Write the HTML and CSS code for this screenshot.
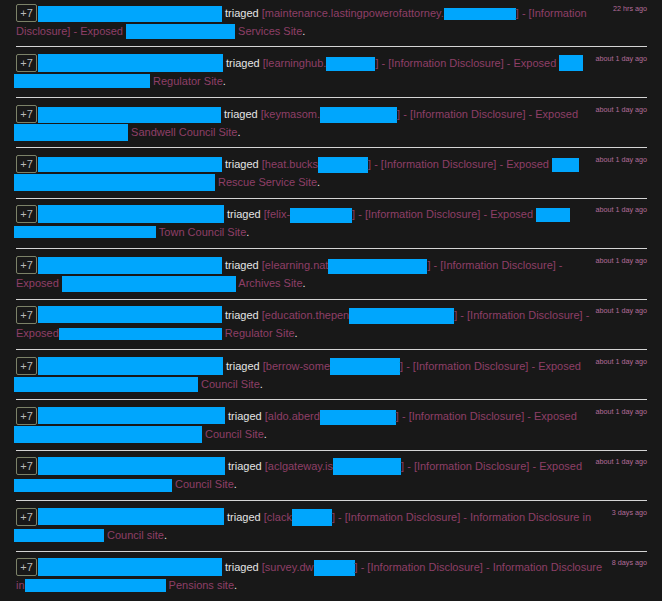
FILE: index.html
```html
<!DOCTYPE html>
<html>
<head>
<meta charset="utf-8">
<link rel="stylesheet" href="styles.css">
</head>
<body>
<ul class="feed">
  <li class="item">
    <p class="text"><span class="badge">+7</span><span class="rd" style="width:184px;height:16px;margin-top:2px"></span> <span class="verb">triaged</span> <span class="title">[maintenance.lastingpowerofattorney.<span class="rd" style="width:72px;height:12px;margin-top:4px"></span>] - [Information Disclosure] - Exposed <span class="rd" style="width:109px;height:15px;margin-top:2px"></span> Services Site</span>.</p>
    <span class="time">22 hrs ago</span>
  </li>
  <li class="item">
    <p class="text"><span class="badge">+7</span><span class="rd" style="width:185px;height:18px;margin-top:0"></span> <span class="verb">triaged</span> <span class="title">[learninghub.<span class="rd" style="width:49px;height:14px;margin-top:3px"></span>] - [Information Disclosure] - Exposed <span class="rd" style="width:24px;height:16px;margin-top:1px"></span> <span class="rd lead" style="width:136px;height:14px;margin-top:2px"></span> Regulator Site</span>.</p>
    <span class="time">about 1 day ago</span>
  </li>
  <li class="item">
    <p class="text"><span class="badge">+7</span><span class="rd" style="width:183px;height:16px;margin-top:2px"></span> <span class="verb">triaged</span> <span class="title">[keymasom.<span class="rd" style="width:77px;height:16px;margin-top:2px"></span>] - [Information Disclosure] - Exposed <span class="rd lead" style="width:114px;height:17px;margin-top:1px"></span> Sandwell Council Site</span>.</p>
    <span class="time">about 1 day ago</span>
  </li>
  <li class="item">
    <p class="text"><span class="badge">+7</span><span class="rd" style="width:184px;height:15px;margin-top:2px"></span> <span class="verb">triaged</span> <span class="title">[heat.bucks<span class="rd" style="width:50px;height:16px;margin-top:2px"></span>] - [Information Disclosure] - Exposed <span class="rd" style="width:27px;height:14px;margin-top:3px"></span> <span class="rd lead" style="width:201px;height:17px;margin-top:1px"></span> Rescue Service Site</span>.</p>
    <span class="time">about 1 day ago</span>
  </li>
  <li class="item">
    <p class="text"><span class="badge">+7</span><span class="rd" style="width:186px;height:18px;margin-top:0"></span> <span class="verb">triaged</span> <span class="title">[felix-<span class="rd" style="width:62px;height:15px;margin-top:3px"></span>] - [Information Disclosure] - Exposed <span class="rd" style="width:34px;height:14px;margin-top:3px"></span> <span class="rd lead" style="width:142px;height:12px;margin-top:3px"></span> Town Council Site</span>.</p>
    <span class="time">about 1 day ago</span>
  </li>
  <li class="item">
    <p class="text"><span class="badge">+7</span><span class="rd" style="width:184px;height:17px;margin-top:1px"></span> <span class="verb">triaged</span> <span class="title">[elearning.nat<span class="rd" style="width:99px;height:15px;margin-top:3px"></span>] - [Information Disclosure] - Exposed <span class="rd" style="width:174px;height:16px;margin-top:2px"></span> Archives Site</span>.</p>
    <span class="time">about 1 day ago</span>
  </li>
  <li class="item">
    <p class="text"><span class="badge">+7</span><span class="rd" style="width:184px;height:17px;margin-top:0"></span> <span class="verb">triaged</span> <span class="title">[education.thepen<span class="rd" style="width:105px;height:16px;margin-top:2px"></span>] - [Information Disclosure] - Exposed<span class="rd" style="width:163px;height:12px;margin-top:4px"></span> Regulator Site</span>.</p>
    <span class="time">about 1 day ago</span>
  </li>
  <li class="item">
    <p class="text"><span class="badge">+7</span><span class="rd" style="width:185px;height:18px;margin-top:0"></span> <span class="verb">triaged</span> <span class="title">[berrow-some<span class="rd" style="width:70px;height:17px;margin-top:1px"></span>] - [Information Disclosure] - Exposed <span class="rd lead" style="width:184px;height:15px;margin-top:2px"></span> Council Site</span>.</p>
    <span class="time">about 1 day ago</span>
  </li>
  <li class="item">
    <p class="text"><span class="badge">+7</span><span class="rd" style="width:187px;height:17px;margin-top:0"></span> <span class="verb">triaged</span> <span class="title">[aldo.aberd<span class="rd" style="width:76px;height:15px;margin-top:3px"></span>] - [Information Disclosure] - Exposed <span class="rd lead" style="width:188px;height:17px;margin-top:1px"></span> Council Site</span>.</p>
    <span class="time">about 1 day ago</span>
  </li>
  <li class="item">
    <p class="text"><span class="badge">+7</span><span class="rd" style="width:187px;height:18px;margin-top:0"></span> <span class="verb">triaged</span> <span class="title">[aclgateway.is<span class="rd" style="width:68px;height:17px;margin-top:1px"></span>] - [Information Disclosure] - Exposed <span class="rd lead" style="width:158px;height:13px;margin-top:4px"></span> Council Site</span>.</p>
    <span class="time">about 1 day ago</span>
  </li>
  <li class="item">
    <p class="text"><span class="badge">+7</span><span class="rd" style="width:186px;height:17px;margin-top:0"></span> <span class="verb">triaged</span> <span class="title">[clack<span class="rd" style="width:40px;height:17px;margin-top:1px"></span>] - [Information Disclosure] - Information Disclosure in <span class="rd lead" style="width:90px;height:13px;margin-top:3px"></span> Council site</span>.</p>
    <span class="time">3 days ago</span>
  </li>
  <li class="item">
    <p class="text"><span class="badge">+7</span><span class="rd" style="width:184px;height:18px;margin-top:0"></span> <span class="verb">triaged</span> <span class="title">[survey.dw<span class="rd" style="width:41px;height:16px;margin-top:2px"></span>] - [Information Disclosure] - Information Disclosure in<span class="rd" style="width:141px;height:13px;margin-top:3px"></span> Pensions site</span>.</p>
    <span class="time">8 days ago</span>
  </li>
</ul>
</body>
</html>
```

FILE: styles.css
```css
html, body {
  margin: 0;
  padding: 0;
  background: #181818;
}

body {
  font-family: "Liberation Sans", Arial, sans-serif;
  font-size: 11px;
  color: #e6e6e6;
}

.feed {
  list-style: none;
  margin: -3px 0 0 0;
  padding: 0 15px 0 16px;
}

.item {
  display: flex;
  align-items: flex-start;
  padding: 6.7px 0 6.74px 0;
  border-bottom: 1px solid #d4d4d4;
}

.text {
  flex: 1 1 auto;
  min-width: 0;
  margin: 0;
  line-height: 18px;
}

.badge {
  display: inline-block;
  vertical-align: top;
  box-sizing: border-box;
  width: 21px;
  height: 18px;
  margin-right: 1px;
  border: 1px solid #7c8268;
  border-radius: 2px;
  color: #b9b9b9;
  font-size: 11px;
  line-height: 16px;
  text-align: center;
}

.rd {
  display: inline-block;
  vertical-align: top;
  background: #00a6fd;
}

.rd.lead {
  margin-left: -2px;
}

.verb {
  color: #e4e4e4;
}

.title {
  color: #8e3f67;
}

.time {
  flex: none;
  margin-left: 2px;
  color: #b26c98;
  font-size: 7.2px;
  line-height: 10px;
  white-space: nowrap;
}
```
